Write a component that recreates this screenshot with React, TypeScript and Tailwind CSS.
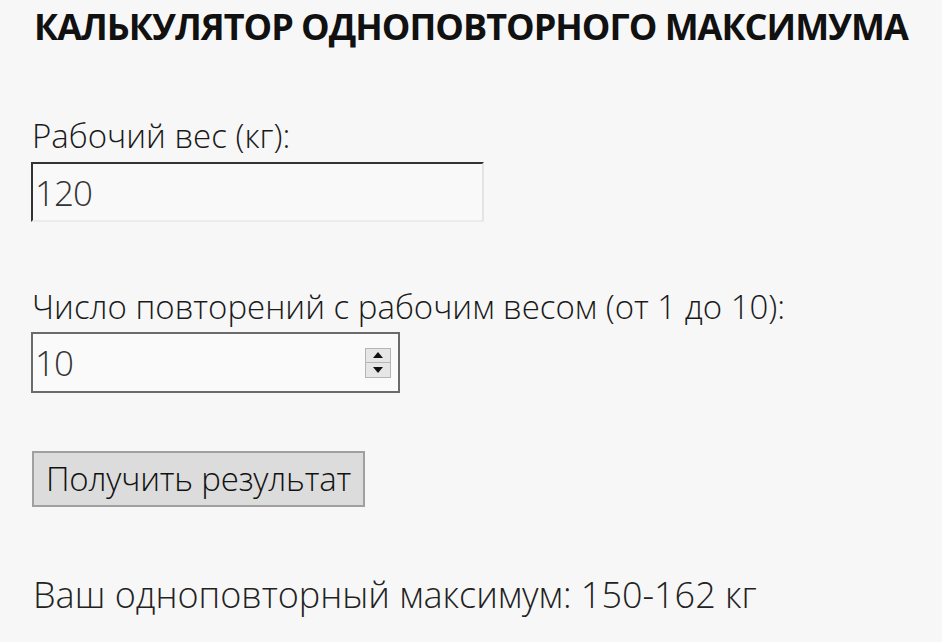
import React from "react";

export default function App() {
  return (
    <div className="w-[942px] h-[642px] bg-[#f7f7f7] overflow-hidden text-[#1a1a1a]" style={{ fontFamily: '"Open Sans", "Noto Sans", sans-serif' }}>
      <div className="pl-[34px] pt-[5px]">
        <h1 className="text-[36px] font-bold leading-[44px] tracking-[-1px] text-[#111] whitespace-nowrap">КАЛЬКУЛЯТОР ОДНОПОВТОРНОГО МАКСИМУМА</h1>
      </div>
      <div className="pl-[31px] pt-[67px] flex flex-col items-start">
        <label className="text-[33px] font-light leading-[40px] pl-[1px] whitespace-nowrap">Рабочий вес (кг):</label>
        <div className="mt-[6px] w-[453px] h-[60px] bg-[#f9f9f9] border-t-2 border-l-2 border-t-[#333] border-l-[#333] border-r-2 border-b-2 border-r-[#e4e4e4] border-b-[#ececec] flex items-center">
          <span className="text-[35px] font-light text-[#333] tracking-[-1px] pl-[2px] pt-[2px]">120</span>
        </div>
        <label className="mt-[65px] text-[33px] font-light leading-[40px] pl-[1px] whitespace-nowrap">Число повторений с рабочим весом (от 1 до 10):</label>
        <div className="mt-[5px] w-[369px] h-[61px] bg-[#fafafa] border-2 border-[#6b6b6b] flex items-center justify-between pr-[7px]">
          <span className="text-[35px] font-light text-[#333] tracking-[-1px] pl-[2px] pt-[2px]">10</span>
          <div className="flex flex-col w-[26px] h-[30px] border border-[#b5b5b5] bg-[#e6e6e6]">
            <div className="flex-1 flex items-center justify-center border-b border-[#b5b5b5]">
              <svg width="10" height="6" viewBox="0 0 10 6"><path d="M5 0 L10 6 L0 6 Z" fill="#111" /></svg>
            </div>
            <div className="flex-1 flex items-center justify-center">
              <svg width="10" height="6" viewBox="0 0 10 6"><path d="M0 0 L10 0 L5 6 Z" fill="#111" /></svg>
            </div>
          </div>
        </div>
        <button className="mt-[58px] ml-[1px] w-[333px] h-[56px] bg-[#dcdcdc] border-2 border-[#a0a0a0] text-[33px] font-light text-[#111] tracking-[-0.2px] leading-[40px] flex items-center justify-center whitespace-nowrap">Получить результат</button>
        <p className="mt-[66px] pl-[2px] text-[36px] font-light leading-[44px] text-[#222] whitespace-nowrap">Ваш одноповторный максимум: 150-162 кг</p>
      </div>
    </div>
  );
}
